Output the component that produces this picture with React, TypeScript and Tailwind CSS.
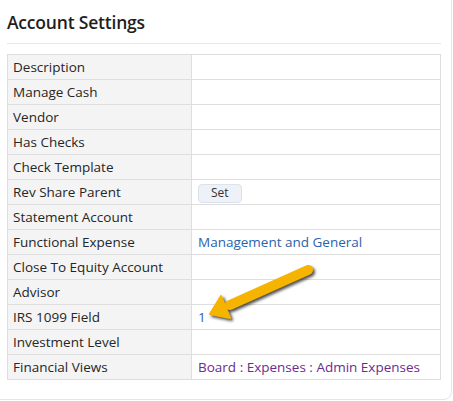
import React from 'react';

type Row = {
  label: string;
  value?: React.ReactNode;
};

const rows: Row[] = [
  { label: 'Description' },
  { label: 'Manage Cash' },
  { label: 'Vendor' },
  { label: 'Has Checks' },
  { label: 'Check Template' },
  {
    label: 'Rev Share Parent',
    value: (
      <button className="h-[19px] px-[12px] rounded-[4px] border border-[#dbe2ec] bg-[#eef2f8] text-[12px] leading-none text-[#333]">
        Set
      </button>
    ),
  },
  { label: 'Statement Account' },
  { label: 'Functional Expense', value: <a className="text-[#2b62ad]">Management and General</a> },
  { label: 'Close To Equity Account' },
  { label: 'Advisor' },
  { label: 'IRS 1099 Field', value: <a className="text-[#2b62ad]">1</a> },
  { label: 'Investment Level' },
  { label: 'Financial Views', value: <a className="text-[#6c2b8f]">Board : Expenses : Admin Expenses</a> },
];

function Arrow() {
  return (
    <svg
      className="absolute left-[200px] top-[257px] drop-shadow-[2px_2px_1.5px_rgba(0,0,0,0.7)]"
      width="120"
      height="70"
      viewBox="0 0 120 70"
    >
      <line x1="108" y1="13" x2="30" y2="48" stroke="#f6b400" strokeWidth="10" strokeLinecap="round" />
      <polygon points="10,57 21,39 30,61" fill="#f6b400" stroke="#f6b400" strokeWidth="2" strokeLinejoin="round" />
    </svg>
  );
}

export default function App() {
  return (
    <div className="relative w-[453px] h-[401px] overflow-hidden bg-white font-['Open_Sans',sans-serif] text-[#262626]">
      <div className="ml-[-10px] mt-[-10px] w-[462px] h-[410px] border border-[#e2e6ee] rounded-[8px] bg-white pt-[19px] pl-[16px] pr-[10px]">
        <h2 className="text-[17.5px] font-semibold leading-[24px] text-[#1e1e1e] tracking-[-0.2px]">Account Settings</h2>
        <div className="mt-[9px] h-px bg-[#e5e7ea] w-[434px]" />
        <table className="mt-[10px] w-[434px] border-collapse text-[13.5px]">
          <tbody>
            {rows.map((r) => (
              <tr key={r.label} className="h-[25px]">
                <td className="w-[184px] border border-[#dedede] bg-[#f4f4f4] pl-[5px] py-0 leading-[24px]">{r.label}</td>
                <td className="border border-[#dedede] bg-white pl-[6px] py-0 leading-[24px]">{r.value}</td>
              </tr>
            ))}
          </tbody>
        </table>
      </div>
      <Arrow />
    </div>
  );
}
